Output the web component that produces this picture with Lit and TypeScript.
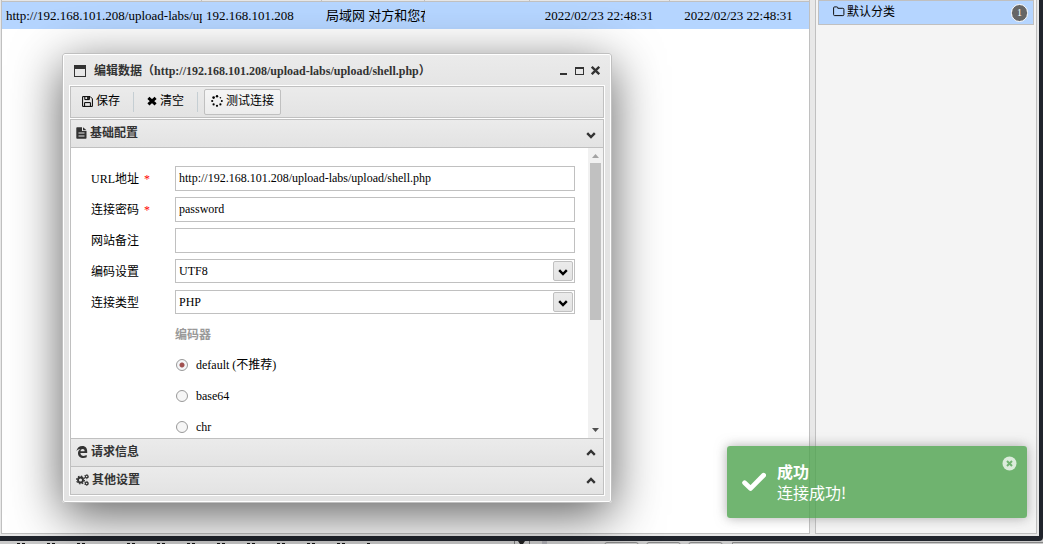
import { LitElement, html, css, svg } from "lit";
import { customElement } from "lit/decorators.js";

const SERIF = css`"Liberation Serif", "Noto Sans CJK SC", serif`;

const chevron = (dir: "up" | "down") => svg`
  <svg class="chev ${dir}" viewBox="0 0 10 7" width="10" height="7" aria-hidden="true">
    <path d=${dir === "down" ? "M1.2 1.2 5 5 8.8 1.2" : "M1.2 5.8 5 2 8.8 5.8"} fill="none" stroke="currentColor" stroke-width="2.4"/>
  </svg>`;

@customElement("shell-grid")
class ShellGrid extends LitElement {
  static styles = css`
    :host { display: block; background: #fff; border: 1px solid #c0c0c0; border-top: 0; overflow: hidden; }
    table { width: 100%; border-collapse: separate; border-spacing: 0; table-layout: fixed; font: 13px/27px ${SERIF}; color: #000; }
    .c1 { width: 200px; } .c2 { width: 120px; } .c3 { width: 103px; } .c4 { width: 105px; } .c5 { width: 140px; }
    th { height: 1px; padding: 0; line-height: 0; background: #e6e6e6; border-bottom: 1px solid #c0c0c0; border-right: 1px solid #c0c0c0; }
    th:last-child { border-right: 0; }
    td { height: 27px; padding: 0 0 0 4px; background: #b5d5ff; white-space: nowrap; overflow: hidden; }
    .date { text-align: center; padding: 0 2px 0 0; }
  `;
  render() {
    return html`<table>
      <colgroup><col class="c1" /><col class="c2" /><col class="c3" /><col class="c4" /><col class="c5" /><col /></colgroup>
      <thead><tr>${[1, 2, 3, 4, 5, 6].map(() => html`<th></th>`)}</tr></thead>
      <tbody><tr>
        <td>http://192.168.101.208/upload-labs/upload/shell.php</td>
        <td>192.168.101.208</td>
        <td>局域网 对方和您在同一内部网</td>
        <td></td>
        <td class="date">2022/02/23 22:48:31</td>
        <td class="date">2022/02/23 22:48:31</td>
      </tr></tbody>
    </table>`;
  }
}

@customElement("category-panel")
class CategoryPanel extends LitElement {
  static styles = css`
    :host { display: block; background: #f4f4f4; border: 1px solid #c0c0c0; border-top: 0; padding: 0 2px; }
    .item { display: flex; align-items: center; gap: 2px; width: 100%; height: 25px; box-sizing: border-box; padding: 0 5px 0 14px;
      background: #b5d5ff; border: 1px solid #c0c0c0; font: 12px/16px ${SERIF}; color: #000; text-align: left; }
    .name { flex: 1; padding-bottom: 1px; }
    .item svg { margin-bottom: 2px; }
    .badge { box-sizing: border-box; width: 17px; height: 18px; border-radius: 9px; border: 1px solid #fff; background: #666; color: #fff;
      font: 10px/16px ${SERIF}; text-align: center; }
  `;
  render() {
    return html`<button class="item">
      <svg width="12" height="11" viewBox="0 0 12 11" aria-hidden="true"><path d="M.6 8.6V1.9q0-1 1-1h2.2q1 0 1 1v.4h5q1.1 0 1.1 1v5.3q0 1-1 1H1.6q-1 0-1-1z" fill="none" stroke="#111" stroke-width="1"/></svg>
      <span class="name">默认分类</span><span class="badge">1</span>
    </button>`;
  }
}

@customElement("edit-window")
class EditWindow extends LitElement {
  static styles = css`
    :host { display: flex; flex-direction: column; box-sizing: border-box; border: 1px solid #c0c0c0; border-radius: 3px;
      background: linear-gradient(#ebebeb, #e3e3e3 40px); padding: 0 6px 6px; font: 12px/16px ${SERIF}; color: #000;
      box-shadow: inset 0 0 0 1px #fff, 0 12px 50px rgba(0, 0, 0, 0.63); }
    button, input, select { font: inherit; color: inherit; }
    .title { display: flex; align-items: center; height: 31px; padding: 2px 2px 0 5px; box-sizing: border-box; color: #333; }
    .title h1 { flex: 1; margin: 0 0 0 8px; font: bold 12px/16px ${SERIF}; }
    .paren { font-family: "Noto Sans CJK TC", sans-serif; line-height: 1; }
    .ctl { display: flex; align-items: center; justify-content: center; width: 16px; height: 16px; padding: 0; border: 0; background: none; }
    .frame { flex: 1; display: flex; flex-direction: column; gap: 1px; background: #fff; padding: 1px; min-height: 0; }
    .toolbar { display: flex; align-items: center; height: 32px; box-sizing: border-box; border: 1px solid #c0c0c0; padding: 0 4px;
      background: linear-gradient(#ebebeb, #e3e3e3); }
    .tool { display: flex; align-items: center; gap: 3px; height: 26px; padding: 0 6px 2px; border: 1px solid transparent; border-radius: 2px; background: none; box-sizing: border-box; white-space: nowrap; }
    .tool.on { border-color: #c0c0c0; background: linear-gradient(#f5f5f5, #ececec); }
    .rule { width: 1px; height: 20px; margin: 0 6px; background: #c5ced3; }
    .acc { flex: 1; display: flex; flex-direction: column; min-height: 0; border: 1px solid #c0c0c0; }
    .head { display: flex; align-items: center; gap: 3px; width: 100%; height: 28px; box-sizing: border-box; flex: none; padding: 0 7px 2px 5px; border: 0;
      border-top: 1px solid #c0c0c0; background: linear-gradient(#ebebeb, #e3e3e3); font: bold 12px/16px ${SERIF}; color: #333; text-align: left; }
    .head.open { border-top: 0; border-bottom: 1px solid #c0c0c0; }
    .head span { flex: 1; }
    .head .down { margin-top: 5px; }
    .head .up { margin-top: 2px; }
    .body { flex: 1; display: flex; min-height: 0; background: #fff; }
    .form { flex: 1; padding: 15px 13px 0 20px; overflow: hidden; }
    .row { display: grid; grid-template-columns: 84px 1fr; height: 31px; }
    .row > label { line-height: 33px; }
    .req { color: red; margin-left: 2px; }
    .box { position: relative; padding-top: 3px; }
    .box input, .box select { display: block; width: 100%; height: 25px; box-sizing: border-box; margin: 0; padding: 0 3px; border: 1px solid #c0c0c0; border-radius: 0; background: #fff; outline: 0; }
    .box select { appearance: none; height: 24px; padding: 0 24px 1px 3px; }
    .drop { position: absolute; right: 2px; top: 5px; width: 20px; height: 20px; box-sizing: border-box; display: flex; align-items: center; justify-content: center;
      border: 1px solid #c0c0c0; border-radius: 2px; background: linear-gradient(#ebebeb, #e3e3e3); pointer-events: none; padding-top: 2px; }
    .coders { margin: 0 0 0 84px; padding: 0; border: 0; }
    legend { padding: 3px 0 0; font-weight: bold; color: #999; line-height: 28px; }
    .opt { display: flex; align-items: center; height: 31px; gap: 8px; }
    .opt input { appearance: none; box-sizing: border-box; width: 12px; height: 12px; margin: 0 0 0 1px; border: 1px solid #999; border-radius: 50%; background: #f6f6f6; }
    .opt input:checked { background: radial-gradient(circle, #a05050 0 2px, #f4f6f8 3px); }
    .bar { width: 15px; flex: none; box-sizing: border-box; padding: 6px 2px; display: flex; flex-direction: column; align-items: center; background: #f1f1f1; }
    .bar i { width: 11px; height: 157px; margin-top: 5px; background: #c1c1c1; }
    .bar b { flex: 1; }
  `;

  render() {
    return html`
      <div class="title">
        <svg width="12" height="12" viewBox="0 0 12 12" aria-hidden="true"><path d="M0 0h12v12H0zM1 4v7h10V4z" fill="#333" fill-rule="evenodd"/></svg>
        <h1>编辑数据<span class="paren">（</span>http://192.168.101.208/upload-labs/upload/shell.php<span class="paren">）</span></h1>
        <button class="ctl" aria-label="minimize"><svg width="7" height="8" viewBox="0 0 7 8"><path d="M0 6h7v2H0z" fill="#333"/></svg></button>
        <button class="ctl" aria-label="maximize"><svg width="9" height="8" viewBox="0 0 9 8"><path d="M0 0h9v8H0zM1 2v5h7V2z" fill="#333" fill-rule="evenodd"/></svg></button>
        <button class="ctl" aria-label="close"><svg width="9" height="9" viewBox="0 0 9 9"><path d="M.8.8l7.4 7.4M8.200.8.8 8.200" stroke="#333" stroke-width="2.300" fill="none"/></svg></button>
      </div>
      <div class="frame">
        <div class="toolbar">
          <button class="tool"><svg width="11" height="11" viewBox="0 0 11 11" aria-hidden="true"><path d="M.6.6h7.600L10.400 2.800v7.600H.6zM2.600 10.400V6.600h5.800v3.800M2.800.6v3h4.600v-3" fill="none" stroke="#000" stroke-width="1"/><path d="M5.200 1h1.600v2.200H5.200z"/></svg>保存</button>
          <div class="rule"></div>
          <button class="tool"><svg width="10" height="10" viewBox="0 0 10 10" aria-hidden="true"><path d="M1.400 1.800l7.200 6.600M8.600 1.800L1.400 8.400" stroke="#000" stroke-width="3" fill="none"/></svg>清空</button>
          <div class="rule"></div>
          <button class="tool on"><svg width="12" height="12" viewBox="0 0 12 12" aria-hidden="true"><circle cx="6" cy="1.300" r="1.200"/><circle cx="9.400" cy="2.700" r=".8"/><circle cx="10.800" cy="6" r="1"/><circle cx="9.400" cy="9.400" r="1.100"/><circle cx="6" cy="10.800" r="1.100"/><circle cx="2.600" cy="9.400" r="1.100"/><circle cx="1.200" cy="6" r="1.100"/><circle cx="2.600" cy="2.600" r="1.300"/></svg>测试连接</button>
        </div>
        <div class="acc">
          <button class="head open">
            <svg width="11" height="12" viewBox="0 0 11 12" aria-hidden="true"><path d="M.3 1q0-.8.8-.8H6v3.900h4.500V11q0 .8-.8.8H1.100q-.8 0-.8-.8zM7 .2l3.500 3H7z" fill="#333"/><path d="M2.500 6h6M2.500 9h6" stroke="#e8e8e8"/></svg>
            <span>基础配置</span>${chevron("down")}
          </button>
          <div class="body">
            <form class="form">
              <div class="row"><label for="url">URL地址<span class="req"> *</span></label><div class="box"><input id="url" value="http://192.168.101.208/upload-labs/upload/shell.php" /></div></div>
              <div class="row"><label for="pwd">连接密码<span class="req"> *</span></label><div class="box"><input id="pwd" value="password" /></div></div>
              <div class="row"><label for="note">网站备注</label><div class="box"><input id="note" /></div></div>
              <div class="row"><label for="enc">编码设置</label><div class="box"><select id="enc"><option>UTF8</option></select><span class="drop">${chevron("down")}</span></div></div>
              <div class="row"><label for="type">连接类型</label><div class="box"><select id="type"><option>PHP</option></select><span class="drop">${chevron("down")}</span></div></div>
              <fieldset class="coders">
                <legend>编码器</legend>
                ${["default (不推荐)", "base64", "chr"].map((t, i) => html`<label class="opt"><input type="radio" name="coder" ?checked=${i === 0} />${t}</label>`)}
              </fieldset>
            </form>
            <div class="bar" aria-hidden="true">
              <svg width="7" height="4" viewBox="0 0 7 4"><path d="M0 4 3.500 0 7 4z" fill="#a3a3a3"/></svg>
              <i></i><b></b>
              <svg width="7" height="4" viewBox="0 0 7 4"><path d="M0 0h7L3.500 4z" fill="#505050"/></svg>
            </div>
          </div>
          <button class="head">
            <svg width="12" height="12" viewBox="0 0 12 12" aria-hidden="true"><path d="M.4 5.200C1 1.800 3.400 0 6.200 0 9.800 0 11.600 2.600 11.200 7H4.400C4.500 9 6 9.900 7.700 9.900 8.900 9.900 9.900 9.600 10.700 9.100V11.200C9.700 11.800 8.500 12 7.300 12 4.200 12 2 10.200 2 7.200 2 5.400 2.900 4 4.600 3.100 2.700 3.200 1.300 3.900.4 5.200zM4.500 5.200H8.600C8.600 3.900 7.900 3.100 6.700 3.100 5.500 3.100 4.700 3.900 4.500 5.200z" fill="#333" fill-rule="evenodd"/></svg>
            <span>请求信息</span>${chevron("up")}
          </button>
          <button class="head">
            <svg width="13" height="12" viewBox="0 0 13 12" aria-hidden="true"><g fill="none" stroke="#333"><circle cx="4.500" cy="6" r="2.500" stroke-width="1.900"/><circle cx="4.500" cy="6" r="3.900" stroke-width="1.200" stroke-dasharray="1.530 1.530"/><circle cx="10.600" cy="2.600" r="1.300" stroke-width="1.100"/><circle cx="10.600" cy="2.600" r="2.100" stroke-width=".8" stroke-dasharray="1.100 1.100"/><circle cx="10.600" cy="9.400" r="1.300" stroke-width="1.100"/><circle cx="10.600" cy="9.400" r="2.100" stroke-width=".8" stroke-dasharray="1.100 1.100"/></g></svg>
            <span>其他设置</span>${chevron("up")}
          </button>
        </div>
      </div>`;
  }
}

@customElement("toast-message")
class ToastMessage extends LitElement {
  static styles = css`
    :host { display: flex; align-items: flex-start; box-sizing: border-box; padding: 15px 10px 14px 15px; border-radius: 3px;
      background: rgba(80, 164, 80, 0.81); box-shadow: 0 0 12px rgba(120, 120, 120, 0.6); color: #fff; font: 16px/21px "Noto Sans CJK SC", sans-serif; }
    .tick { margin: 11px 11px 0 0; }
    .text { flex: 1; }
    .text strong { display: block; }
    .close { margin: -5px 0 0; padding: 0; border: 0; background: none; line-height: 0; }
  `;
  render() {
    return html`
      <svg class="tick" width="24" height="20" viewBox="0 0 24 20" aria-hidden="true"><path d="M2.600 10.800 8.600 16.400 21.600 3.200" fill="none" stroke="#fff" stroke-width="4.800" stroke-linecap="round" stroke-linejoin="round"/></svg>
      <div class="text"><strong>成功</strong>连接成功!</div>
      <button class="close" aria-label="close"><svg width="15" height="15" viewBox="0 0 15 15"><circle cx="7.500" cy="7.500" r="7" fill="#dcecdc"/><path d="M5 5l5 5M10 5l-5 5" stroke="#72b472" stroke-width="2"/></svg></button>`;
  }
}

const TICKS = [17, 47, 77, 127, 157, 187, 217, 247, 277, 307, 337];

@customElement("app-root")
class AppRoot extends LitElement {
  static styles = css`
    :host { display: flex; flex-direction: column; height: 100vh; position: relative; overflow: hidden; background: #c9c9c9; }
    .app { flex: 1; min-height: 0; display: grid; grid-template-columns: 1fr 222px; gap: 5px; box-sizing: border-box; padding: 0 2px 2px 1px;
      background: #e8e8e8; border-right: 4px solid #20242c; }
    .edge { height: 5px; background: #20242c; border-bottom-right-radius: 4px; }
    .behind { display: block; height: 3px; width: 100%; }
    edit-window { position: absolute; left: 62px; top: 53px; width: 550px; height: 450px; }
    toast-message { position: absolute; right: 16px; bottom: 26px; width: 300px; height: 72px; }
  `;
  render() {
    return html`
      <div class="app"><shell-grid></shell-grid><category-panel></category-panel></div>
      <div class="edge"></div>
      <svg class="behind" viewBox="0 0 1043 3" preserveAspectRatio="xMinYMin slice" aria-hidden="true">
        ${TICKS.map((x) => svg`<path d="M${x} 2h3v1h-3zM${x + 5} 2h3v1h-3z" fill="#111"/>`)}
        <path d="M367 2h3v1h-3z" fill="#111"/>
        <path d="M514 0h1v3h-1zM529 0h1v3h-1z" fill="#777"/><path d="M518 0h7l-2 3h-3z" fill="#222"/><path d="M542 0h5v3h-5z" fill="#adadb3"/>
        <g fill="none" stroke="#888"><path d="M605 3q0-1.500 2-1.500h29q2 0 2 1.500M647 3q0-1.500 2-1.500h29q2 0 2 1.500M689 3q0-1.500 2-1.500h29q2 0 2 1.500M732.500 3V1.500H1043"/></g>
      </svg>
      <edit-window></edit-window>
      <toast-message></toast-message>`;
  }
}
